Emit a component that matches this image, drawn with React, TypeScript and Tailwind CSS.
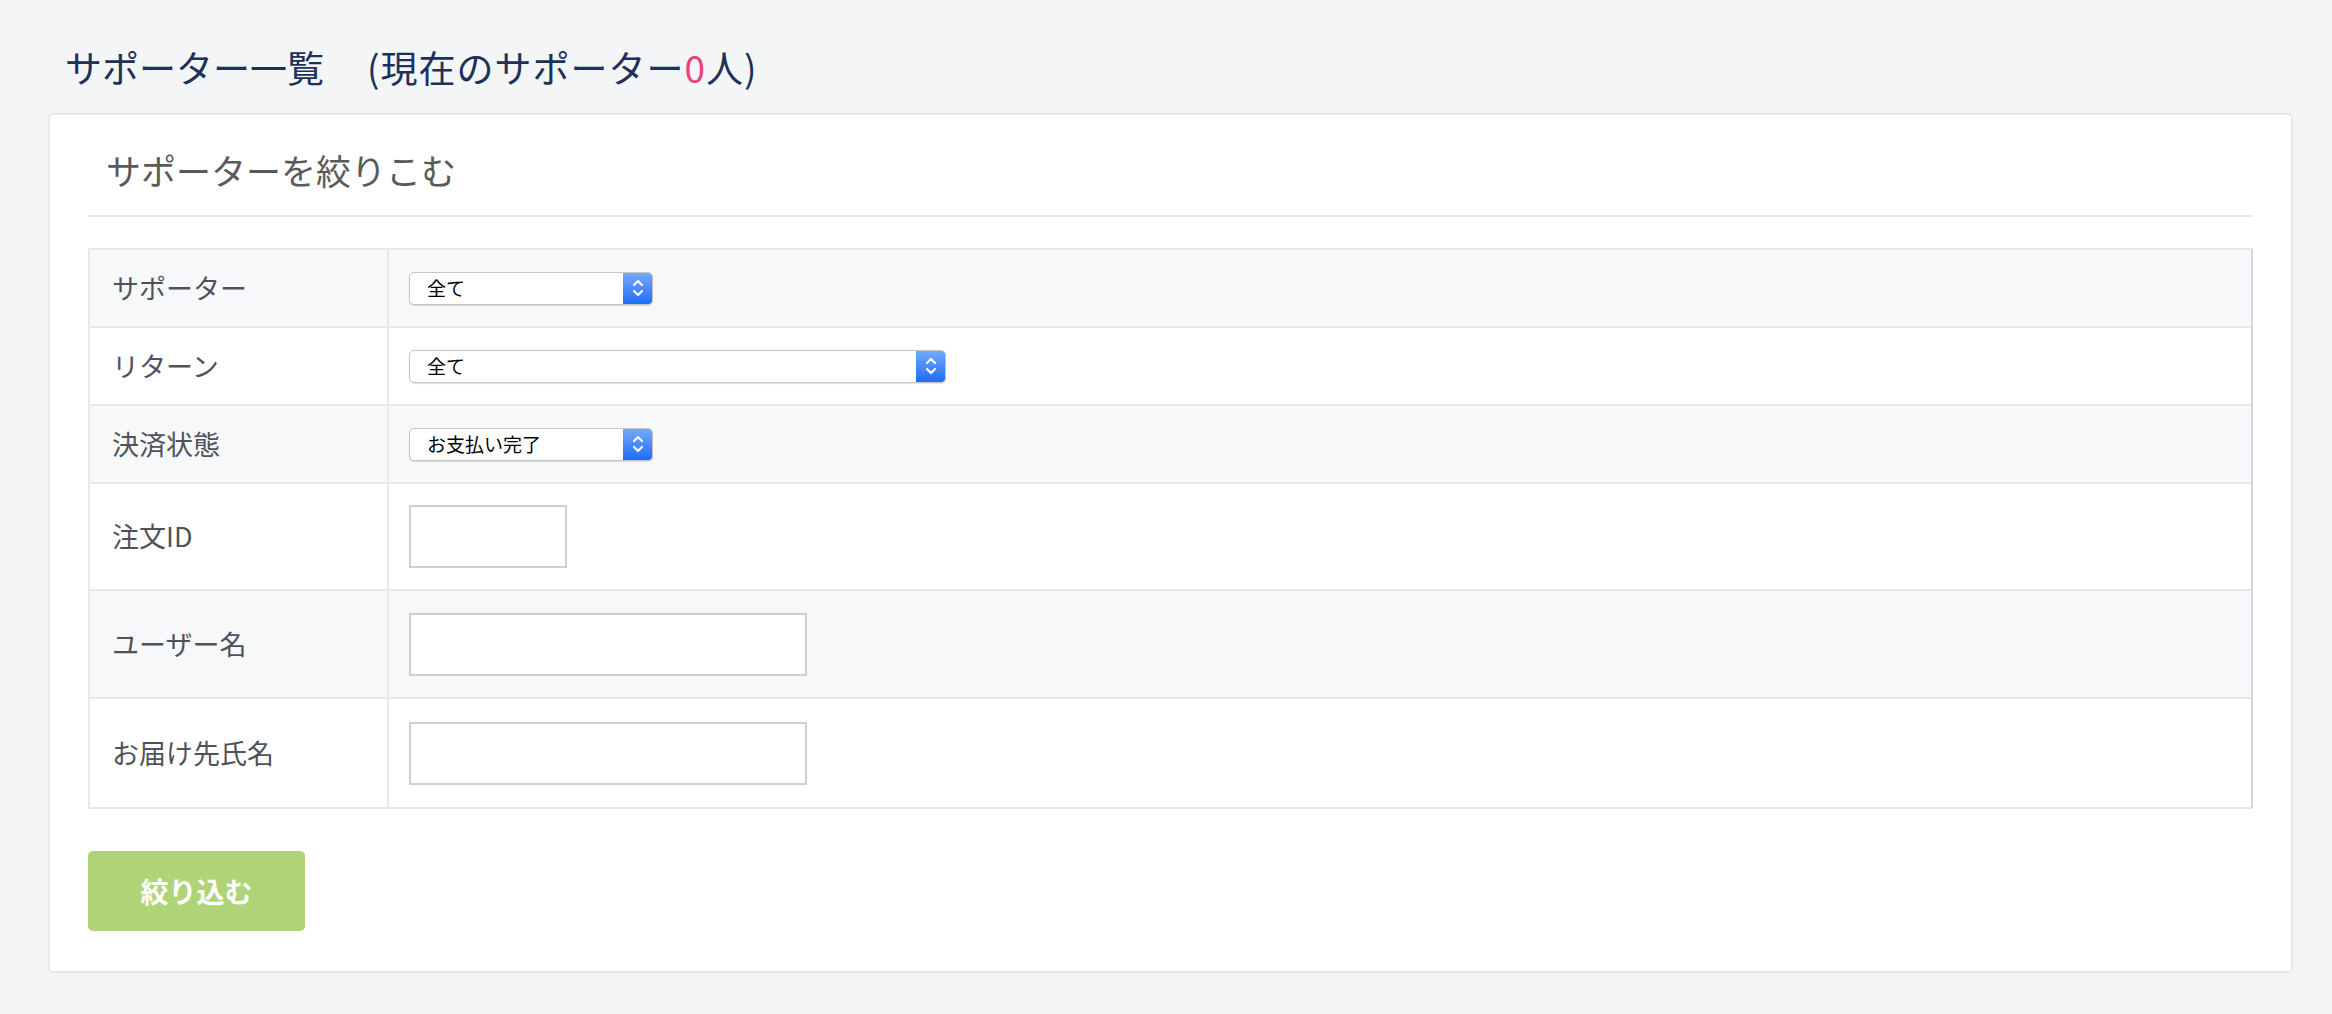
import React from 'react';

const jp = "font-['Noto_Sans_CJK_JP','Noto_Sans',sans-serif]";

function Chevrons() {
    return (
        <svg width="14" height="22" viewBox="0 0 14 22" fill="none" stroke="white" strokeWidth="2.2" strokeLinecap="round" strokeLinejoin="round">
            <path d="M3 8 L7 4 L11 8" />
            <path d="M3 14 L7 18 L11 14" />
        </svg>
    );
}

function FakeSelect({ value, width }: { value: string; width: string }) {
    return (
        <div className={`${width} h-[33px] flex rounded-[5px] border border-[#c4c4c4] bg-white overflow-hidden shadow-[0_1px_1px_rgba(0,0,0,0.12)]`}>
            <div className="flex-1 flex items-center pl-[17px] text-[19px] text-black">{value}</div>
            <div className="w-[29px] flex items-center justify-center bg-linear-to-b from-[#72a9fb] to-[#1b6af5]">
                <Chevrons />
            </div>
        </div>
    );
}

function TextBox({ width }: { width: string }) {
    return <div className={`${width} h-[63px] border-2 border-[#cfcfcf] bg-white`} />;
}

const rows = [
    { label: 'サポーター', height: 'h-[78px]', bg: 'bg-[#f7f8fa]', field: <FakeSelect value="全て" width="w-[244px]" /> },
    { label: 'リターン', height: 'h-[78px]', bg: 'bg-white', field: <FakeSelect value="全て" width="w-[537px]" /> },
    { label: '決済状態', height: 'h-[78px]', bg: 'bg-[#f7f8fa]', field: <FakeSelect value="お支払い完了" width="w-[244px]" /> },
    { label: '注文ID', height: 'h-[107px]', bg: 'bg-white', field: <TextBox width="w-[158px]" /> },
    { label: 'ユーザー名', height: 'h-[108px]', bg: 'bg-[#f7f8fa]', field: <TextBox width="w-[398px]" /> },
    { label: 'お届け先氏名', height: 'h-[108px]', bg: 'bg-white', field: <TextBox width="w-[398px]" /> },
];

export default function App() {
    return (
        <div className={`min-h-[1014px] w-full bg-[#f4f5f7] ${jp}`}>
            <h1 className="pt-[43px] pl-[65px] text-[37px] leading-[48px] text-[#1e3158] font-normal">
                <span>サポーター一覧</span>
                <span className="ml-[43px] tracking-[1px]">
                    (現在のサポーター<span className="text-[#e9457c]">0</span>人)
                </span>
            </h1>

            <div className="mt-[22px] ml-[48px] w-[2245px] rounded-[5px] border-2 border-[#e6e8eb] bg-white px-[38px] pt-[32px] pb-[40px]">
                <h2 className="pl-[18px] text-[35px] leading-[46px] text-[#5a5a5a] font-normal">サポーターを絞りこむ</h2>
                <div className="mt-[22px] h-[2px] bg-[#e7eaee]" />

                <div className="mt-[31px] border-2 border-[#e6e9ec] border-r-[#d3d6e0]">
                    {rows.map((row, index) => (
                        <div
                            key={row.label}
                            className={`flex ${row.height} ${row.bg} ${index < rows.length - 1 ? 'border-b-2 border-[#e6e9ec]' : ''}`}
                        >
                            <div className="w-[299px] shrink-0 border-r-2 border-[#e6e9ec] flex items-center pl-[22px] text-[27px] text-[#4f5359]">
                                {row.label}
                            </div>
                            <div className="flex-1 flex items-center pl-[20px]">{row.field}</div>
                        </div>
                    ))}
                </div>

                <button className="mt-[42px] w-[217px] h-[80px] rounded-[5px] bg-[#aed477] text-white text-[28px] font-semibold flex items-center justify-center">
                    絞り込む
                </button>
            </div>
        </div>
    );
}
